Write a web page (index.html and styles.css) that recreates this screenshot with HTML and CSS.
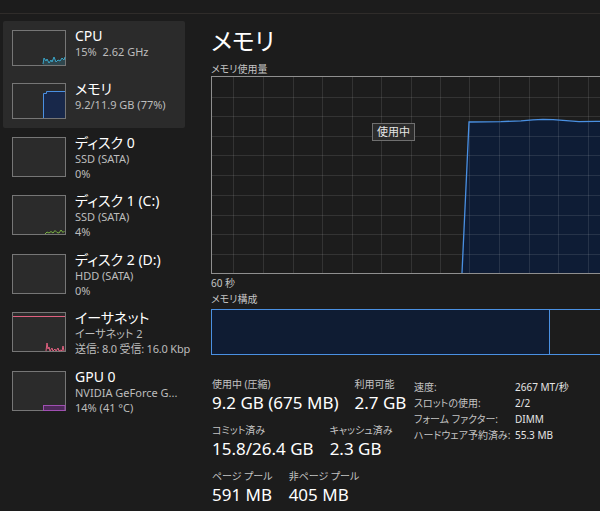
FILE: index.html
```html
<!DOCTYPE html>
<html lang="ja">
<head>
<meta charset="utf-8">
<link rel="stylesheet" href="styles.css">
</head>
<body>
<div class="topbar"></div>
<div class="app">
  <nav class="sidebar">
    <div class="group">
      <div class="item">
        <svg class="thumb" viewBox="0 0 54 36">
          <rect x=".5" y=".5" width="53" height="35" fill="#2b2b2b" stroke="#767676"/>
          <polygon points="31,35 31,34 32,28 34,31 35,29 37,33 39,30 40,32 42,27 44,32 46,30 48,31 50,28 52,30 53,27 53,35" fill="rgba(63,167,200,0.22)"/>
          <polyline points="31,34 32,28 34,31 35,29 37,33 39,30 40,32 42,27 44,32 46,30 48,31 50,28 52,30 53,27" fill="none" stroke="#3aa6c9" stroke-width="1"/>
        </svg>
        <div class="info">
          <div class="title">CPU</div>
          <div class="sub">15%&nbsp; 2.62 GHz</div>
        </div>
      </div>
      <div class="item">
        <svg class="thumb" viewBox="0 0 54 36">
          <rect x=".5" y=".5" width="53" height="35" fill="#2b2b2b" stroke="#767676"/>
          <polygon points="31.5,35 31.5,10.5 34.5,10.5 34.5,8.5 53,8.5 53,35" fill="#18284a"/>
          <polyline points="31.5,35 31.5,10.5 34.5,10.5 34.5,8.5 53,8.5" fill="none" stroke="#4a90e2" stroke-width="1"/>
        </svg>
        <div class="info">
          <div class="title">メモリ</div>
          <div class="sub">9.2/11.9 GB (77%)</div>
        </div>
      </div>
    </div>
    <div class="list">
      <div class="item">
        <svg class="thumb" viewBox="0 0 54 40">
          <rect x=".5" y=".5" width="53" height="39" fill="#2b2b2b" stroke="#767676"/>
        </svg>
        <div class="info">
          <div class="title">ディスク 0</div>
          <div class="sub">SSD (SATA)</div>
          <div class="sub">0%</div>
        </div>
      </div>
      <div class="item">
        <svg class="thumb" viewBox="0 0 54 40">
          <rect x=".5" y=".5" width="53" height="39" fill="#2b2b2b" stroke="#767676"/>
          <polyline points="33,39 35,37 37,38 39,36.5 41,38 43,35.5 45,37.5 47,38 49,35 51,37.5 52.5,36" fill="none" stroke="#79b042" stroke-width="1"/>
        </svg>
        <div class="info">
          <div class="title">ディスク 1 (C:)</div>
          <div class="sub">SSD (SATA)</div>
          <div class="sub">4%</div>
        </div>
      </div>
      <div class="item">
        <svg class="thumb" viewBox="0 0 54 40">
          <rect x=".5" y=".5" width="53" height="39" fill="#2b2b2b" stroke="#767676"/>
        </svg>
        <div class="info">
          <div class="title">ディスク 2 (D:)</div>
          <div class="sub">HDD (SATA)</div>
          <div class="sub">0%</div>
        </div>
      </div>
      <div class="item">
        <svg class="thumb" viewBox="0 0 54 40">
          <rect x=".5" y=".5" width="53" height="39" fill="#2b2b2b" stroke="#767676"/>
          <line x1="1" y1="4.5" x2="53" y2="4.5" stroke="#e0607f" stroke-width="1"/>
          <polyline points="34,39 35,31 36,37 37,35 38,39 40,36 41,39 43,37 44,39 46,36 47,39 49,38 50,39 51,34 52,39" fill="none" stroke="#e0607f" stroke-width="1"/>
        </svg>
        <div class="info">
          <div class="title">イーサネット</div>
          <div class="sub">イーサネット 2</div>
          <div class="sub tight">送信: 8.0 受信: 16.0 Kbp</div>
        </div>
      </div>
      <div class="item">
        <svg class="thumb" viewBox="0 0 54 40">
          <rect x=".5" y=".5" width="53" height="39" fill="#2b2b2b" stroke="#767676"/>
          <rect x="31.5" y="34.5" width="21.5" height="5" fill="#4e2a5a" stroke="#a04fb2" stroke-width="1"/>
        </svg>
        <div class="info">
          <div class="title">GPU 0</div>
          <div class="sub">NVIDIA GeForce G...</div>
          <div class="sub">14% (41 °C)</div>
        </div>
      </div>
    </div>
  </nav>

  <main class="main">
    <h1 class="page-title">メモリ</h1>
    <div class="label usage-label">メモリ使用量</div>
    <div class="graph">
      <svg width="400" height="198" viewBox="0 0 400 198">
        <rect x="0" y="0" width="400" height="198" fill="#1c1c1c"/>
        <polygon points="251,197 258,46 290,45.6 310,44.8 322,43.8 332,43.4 342,43.6 352,44.4 368,45.6 385,45.4 400,45 400,197" fill="#0e1c35"/>
        <g stroke="rgba(255,255,255,0.1)" stroke-width="1">
          <line x1="22.5" y1="0" x2="22.5" y2="198"/>
          <line x1="52.5" y1="0" x2="52.5" y2="198"/>
          <line x1="82.5" y1="0" x2="82.5" y2="198"/>
          <line x1="111.5" y1="0" x2="111.5" y2="198"/>
          <line x1="141.5" y1="0" x2="141.5" y2="198"/>
          <line x1="170.5" y1="0" x2="170.5" y2="198"/>
          <line x1="200.5" y1="0" x2="200.5" y2="198"/>
          <line x1="229.5" y1="0" x2="229.5" y2="198"/>
          <line x1="258.5" y1="0" x2="258.5" y2="198"/>
          <line x1="288.5" y1="0" x2="288.5" y2="198"/>
          <line x1="318.5" y1="0" x2="318.5" y2="198"/>
          <line x1="347.5" y1="0" x2="347.5" y2="198"/>
          <line x1="377.5" y1="0" x2="377.5" y2="198"/>
          <line x1="0" y1="21.5" x2="400" y2="21.5"/>
          <line x1="0" y1="40.5" x2="400" y2="40.5"/>
          <line x1="0" y1="60.5" x2="400" y2="60.5"/>
          <line x1="0" y1="79.5" x2="400" y2="79.5"/>
          <line x1="0" y1="99.5" x2="400" y2="99.5"/>
          <line x1="0" y1="119.5" x2="400" y2="119.5"/>
          <line x1="0" y1="139.5" x2="400" y2="139.5"/>
          <line x1="0" y1="158.5" x2="400" y2="158.5"/>
          <line x1="0" y1="178.5" x2="400" y2="178.5"/>
        </g>
        <polyline points="251,197 258,46 290,45.6 310,44.8 322,43.8 332,43.4 342,43.6 352,44.4 368,45.6 385,45.4 400,45" fill="none" stroke="#4a90e2" stroke-width="1.3"/>
        <rect x=".5" y=".5" width="400" height="197" fill="none" stroke="#8f8f8f"/>
      </svg>
      <div class="tooltip">使用中</div>
    </div>
    <div class="label time-label">60 秒</div>
    <div class="label comp-label">メモリ構成</div>
    <div class="comp">
      <div class="comp-used"></div>
    </div>

    <div class="stats">
      <div class="stats-left">
        <div class="stat-row">
          <div class="stat"><div class="k">使用中 (圧縮)</div><div class="v">9.2 GB (675 MB)</div></div>
          <div class="stat"><div class="k">利用可能</div><div class="v">2.7 GB</div></div>
        </div>
        <div class="stat-row">
          <div class="stat"><div class="k">コミット済み</div><div class="v">15.8/26.4 GB</div></div>
          <div class="stat"><div class="k">キャッシュ済み</div><div class="v">2.3 GB</div></div>
        </div>
        <div class="stat-row">
          <div class="stat"><div class="k">ページ プール</div><div class="v">591 MB</div></div>
          <div class="stat"><div class="k">非ページ プール</div><div class="v">405 MB</div></div>
        </div>
      </div>
      <div class="stats-right">
        <div class="rk">速度:</div><div class="rv">2667 MT/秒</div>
        <div class="rk">スロットの使用:</div><div class="rv">2/2</div>
        <div class="rk">フォーム ファクター:</div><div class="rv">DIMM</div>
        <div class="rk">ハードウェア予約済み:</div><div class="rv">55.3 MB</div>
      </div>
    </div>
  </main>
</div>
</body>
</html>
```

FILE: styles.css
```css
* {
  box-sizing: border-box;
  margin: 0;
  padding: 0;
}

html, body {
  width: 600px;
  height: 511px;
  overflow: hidden;
  background: #1c1c1c;
}

body {
  font-family: "Noto Sans", "Noto Sans CJK JP", sans-serif;
  color: #ffffff;
  font-feature-settings: "palt";
}

.topbar {
  height: 14px;
  border-bottom: 1px solid #2f2c2a;
}

.app {
  display: flex;
  height: 497px;
}

/* ---------- sidebar ---------- */
.sidebar {
  width: 198px;
  flex: none;
  overflow: hidden;
  padding-top: 7px;
}

.group {
  margin-left: 3px;
  width: 182px;
  background: #2b2b2b;
  border-radius: 2px;
  padding: 9px 0 9px 9px;
  display: flex;
  flex-direction: column;
  gap: 17px;
}

.item {
  display: flex;
  height: 36px;
}

.thumb {
  display: block;
  flex: none;
  width: 54px;
  height: 36px;
}

.list {
  padding: 9px 0 0 12px;
  display: flex;
  flex-direction: column;
}

.list .item {
  height: 40px;
  margin-bottom: 18px;
}

.list .item:nth-child(even) {
  margin-bottom: 19px;
}

.list .thumb {
  height: 40px;
}

.info {
  margin: -2px 0 0 9px;
  white-space: nowrap;
}

.title {
  font-size: 14px;
  line-height: 16px;
  color: #ffffff;
}

.sub {
  font-size: 11px;
  line-height: 15px;
  color: #bdbdbd;
}

.sub.tight {
  letter-spacing: -0.2px;
}

/* ---------- main ---------- */
.main {
  flex: 1;
  min-width: 0;
  overflow: hidden;
  padding-left: 13px;
}

.page-title {
  font-size: 24px;
  line-height: 28px;
  font-weight: 400;
  margin-top: 13px;
}

.label {
  font-size: 10px;
  line-height: 12px;
  color: #c4c4c4;
}

.usage-label {
  margin-top: 8px;
}

.graph {
  position: relative;
  margin-top: 1px;
  width: 400px;
  height: 198px;
}

.graph svg {
  display: block;
}

.tooltip {
  position: absolute;
  left: 161px;
  top: 47px;
  width: 43px;
  height: 18px;
  background: #2b2b2b;
  border: 1px solid #6f6f6f;
  font-size: 11px;
  line-height: 16px;
  color: #e6e6e6;
  text-align: center;
}

.time-label {
  margin-top: 3px;
}

.comp-label {
  margin-top: 4px;
}

.comp {
  margin-top: 4px;
  width: 400px;
  height: 46px;
  border: 1px solid #4a90e2;
  display: flex;
}

.comp-used {
  width: 338px;
  height: 100%;
  background: #0f1c33;
  border-right: 1px solid #4a90e2;
}

/* ---------- stats ---------- */
.stats {
  display: flex;
  align-items: flex-start;
  margin-top: 23px;
}

.stats-left {
  width: 202px;
  flex: none;
  margin-left: 1px;
  display: flex;
  flex-direction: column;
  gap: 10px;
}

.stat-row {
  display: flex;
  gap: 16px;
}

.stat .k {
  font-size: 10px;
  line-height: 12px;
  color: #c4c4c4;
  white-space: nowrap;
}

.stat .v {
  font-size: 17px;
  line-height: 22px;
  margin-top: 2px;
  color: #ffffff;
  white-space: nowrap;
}

.stats-right {
  display: grid;
  grid-template-columns: 101px auto;
  grid-auto-rows: 16px;
  align-content: start;
  font-size: 10px;
  line-height: 16px;
  margin-top: 1px;
  white-space: nowrap;
}

.rk {
  color: #c4c4c4;
}

.rv {
  color: #e6e6e6;
}
```
